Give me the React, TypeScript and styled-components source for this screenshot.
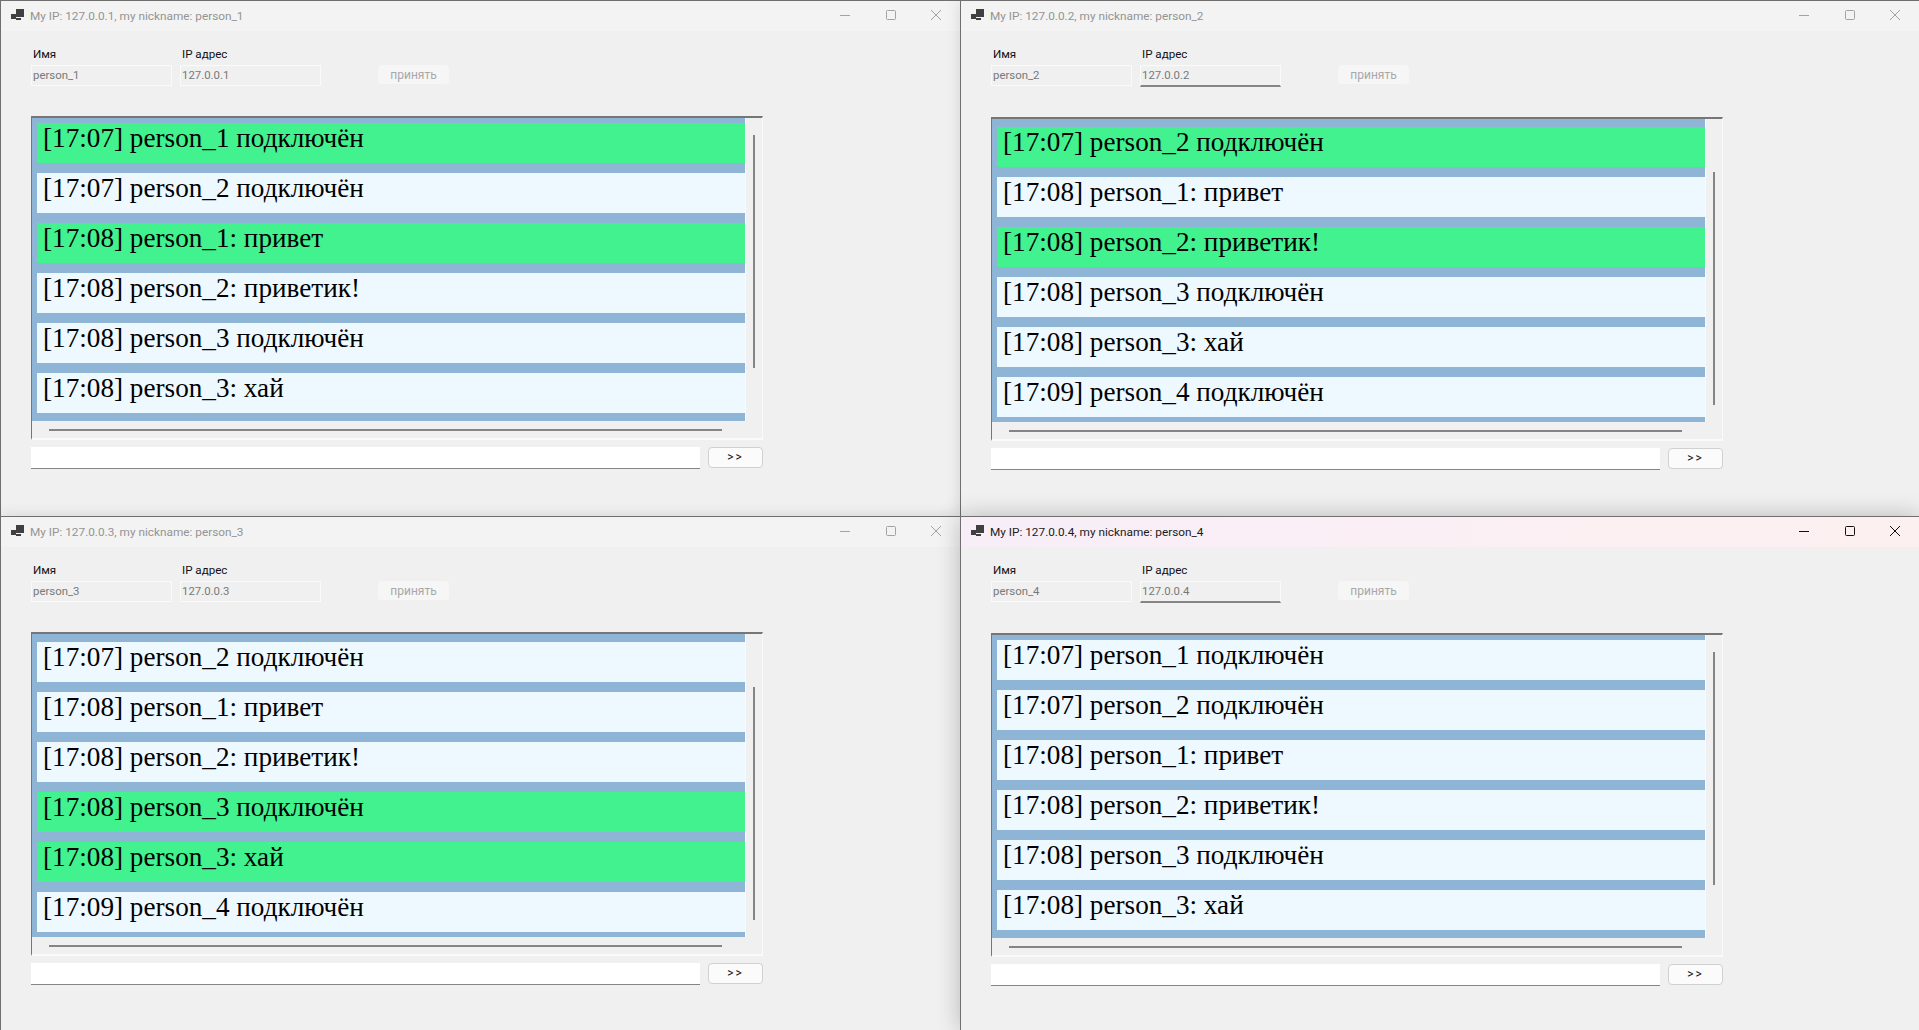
import React from "react";
import styled, { createGlobalStyle } from "styled-components";

const Global = createGlobalStyle`
  html, body { margin: 0; padding: 0; height: 100%; background: #f0f0f0; overflow: hidden; }
  #root { height: 100%; }
`;

const Desktop = styled.div`
  display: grid;
  grid-template-columns: 960px 959px;
  grid-template-rows: 516px 514px;
  width: 1919px;
  height: 1030px;
  overflow: hidden;
`;

const Win = styled.div<{ $active?: boolean; $layer: number }>`
  position: relative;
  z-index: ${(p) => p.$layer};
  box-sizing: border-box;
  display: flex;
  flex-direction: column;
  background: #f0f0f0;
  border: 1px solid #6f6f6f;
  border-right-width: 0;
  border-bottom-width: 0;
  box-shadow: 0 0 ${(p) => (p.$active ? 22 : 14)}px rgba(0, 0, 0, ${(p) => (p.$active ? 0.24 : 0.12)});
  font-family: Roboto, "Noto Sans", sans-serif;
`;

const TitleBar = styled.div<{ $active?: boolean }>`
  box-sizing: border-box;
  display: flex;
  align-items: center;
  height: 30px;
  flex: none;
  padding: 0 1px 2px 10px;
  background: ${(p) => (p.$active ? "linear-gradient(90deg, #f8eef8, #fdf0f0)" : "#f3f3f3")};
  color: ${(p) => (p.$active ? "#1b1b1b" : "#949494")};
`;

const TitleText = styled.span`
  margin: 2px 0 0 6px;
  flex: 1;
  font-size: 11.8px;
  white-space: nowrap;
`;

const CtlBtn = styled.div<{ $active?: boolean }>`
  width: 45.5px;
  height: 28px;
  display: flex;
  align-items: center;
  justify-content: center;
  color: ${(p) => (p.$active ? "#111" : "#a3a3a3")};
`;

const Body = styled.div`
  flex: 1;
  padding: 16px 0 0 30px;
  width: 732px;
`;

const Form = styled.div`
  display: flex;
  align-items: flex-start;
`;

const Field = styled.div`
  width: 141px;
  margin-right: 8px;
`;

const FieldLabel = styled.div`
  height: 15px;
  margin-bottom: 3px;
  padding-left: 2px;
  font-size: 11.6px;
  line-height: 15px;
  color: #111;
`;

const TextBox = styled.div<{ $focus?: boolean }>`
  box-sizing: border-box;
  height: ${(p) => (p.$focus ? 22 : 21)}px;
  padding-left: 1px;
  border: 1px solid #fafafa;
  border-bottom: ${(p) => (p.$focus ? "2px solid #858585" : "1px solid #fafafa")};
  font-size: 11.4px;
  line-height: 18px;
  color: #787878;
`;

const Accept = styled.div`
  margin: 18px 0 0 49px;
  width: 71px;
  height: 19px;
  background: #f6f6f6;
  border-radius: 4px;
  font-size: 12px;
  line-height: 21px;
  text-align: center;
  color: #a8a8a8;
`;

const Frame = styled.div`
  box-sizing: border-box;
  margin-top: 30px;
  width: 732px;
  height: 324px;
  display: grid;
  grid-template-columns: 714px 16px;
  grid-template-rows: 303px 1fr;
  border-top: 2px solid #767676;
  border-left: 1px solid #767676;
  border-right: 1px solid #fafafa;
  border-bottom: 2px solid #fafafa;
`;

const Viewport = styled.div<{ $top: number }>`
  overflow: hidden;
  background: #8eb4d6;
  padding: ${(p) => p.$top}px 0 0 5px;
  border-right: 1px solid #fafafa;
  display: flex;
  flex-direction: column;
  gap: 10px;
`;

const Row = styled.div<{ $mine?: boolean }>`
  flex: none;
  height: 40px;
  padding-left: 6px;
  background: ${(p) => (p.$mine ? "#42f28e" : "#edf8ff")};
  font-family: "Liberation Serif", "Times New Roman", serif;
  font-size: 27.2px;
  line-height: 31px;
  color: #000;
  white-space: nowrap;
`;

const VTrack = styled.div`
  position: relative;
`;

const VThumb = styled.div<{ $top: number }>`
  position: absolute;
  left: 7px;
  top: ${(p) => p.$top}px;
  width: 2px;
  height: 233px;
  background: #858585;
`;

const HTrack = styled.div`
  grid-column: 1 / span 2;
  padding: 8px 0 0 17px;
`;

const HThumb = styled.div`
  width: 673px;
  height: 2px;
  background: #858585;
`;

const SendRow = styled.div`
  display: flex;
  margin-top: 7px;
  gap: 8px;
`;

const SendBox = styled.div`
  box-sizing: border-box;
  width: 669px;
  height: 22px;
  background: #fff;
  border-bottom: 1px solid #858585;
`;

const SendBtn = styled.div`
  box-sizing: border-box;
  width: 55px;
  height: 21px;
  background: #fbfbfb;
  border: 1px solid #d0d0d0;
  border-radius: 4px;
  font-size: 12px;
  letter-spacing: 2px;
  line-height: 18px;
  text-align: center;
  color: #111;
`;

const AppIcon = () => (
  <svg width="13" height="12" viewBox="0 0 13 12" fill="#404040">
    <rect x="0" y="5" width="5" height="5" />
    <rect x="5" y="0" width="8" height="8" />
    <rect x="5" y="9" width="5" height="2" />
  </svg>
);

const MinIcon = () => (
  <svg width="12" height="12" viewBox="0 0 12 12" stroke="currentColor" fill="none">
    <path d="M1 6.5H11" />
  </svg>
);

const MaxIcon = () => (
  <svg width="12" height="12" viewBox="0 0 12 12" stroke="currentColor" fill="none">
    <rect x="1.5" y="1.5" width="9" height="9" rx="1" />
  </svg>
);

const CloseIcon = () => (
  <svg width="12" height="12" viewBox="0 0 12 12" stroke="currentColor" fill="none">
    <path d="M1 1L11 11M11 1L1 11" />
  </svg>
);

type Msg = [string, boolean?];

const windows: {
  n: number;
  active?: boolean;
  focus?: boolean;
  top: number;
  thumb: number;
  layer: number;
  rows: Msg[];
}[] = [
  {
    n: 1,
    top: 5,
    thumb: 17,
    layer: 1,
    rows: [
      ["[17:07] person_1 подключён", true],
      ["[17:07] person_2 подключён"],
      ["[17:08] person_1: привет", true],
      ["[17:08] person_2: приветик!"],
      ["[17:08] person_3 подключён"],
      ["[17:08] person_3: хай"],
    ],
  },
  {
    n: 2,
    focus: true,
    top: 8,
    thumb: 53,
    layer: 2,
    rows: [
      ["[17:07] person_2 подключён", true],
      ["[17:08] person_1: привет"],
      ["[17:08] person_2: приветик!", true],
      ["[17:08] person_3 подключён"],
      ["[17:08] person_3: хай"],
      ["[17:09] person_4 подключён"],
    ],
  },
  {
    n: 3,
    top: 8,
    thumb: 53,
    layer: 3,
    rows: [
      ["[17:07] person_2 подключён"],
      ["[17:08] person_1: привет"],
      ["[17:08] person_2: приветик!"],
      ["[17:08] person_3 подключён", true],
      ["[17:08] person_3: хай", true],
      ["[17:09] person_4 подключён"],
    ],
  },
  {
    n: 4,
    active: true,
    focus: true,
    top: 5,
    thumb: 17,
    layer: 4,
    rows: [
      ["[17:07] person_1 подключён"],
      ["[17:07] person_2 подключён"],
      ["[17:08] person_1: привет"],
      ["[17:08] person_2: приветик!"],
      ["[17:08] person_3 подключён"],
      ["[17:08] person_3: хай"],
    ],
  },
];

export default function App() {
  return (
    <>
      <Global />
      <Desktop>
        {windows.map((w) => (
          <Win key={w.n} $active={w.active} $layer={w.layer}>
            <TitleBar $active={w.active}>
              <AppIcon />
              <TitleText>{`My IP: 127.0.0.${w.n}, my nickname: person_${w.n}`}</TitleText>
              <CtlBtn $active={w.active}><MinIcon /></CtlBtn>
              <CtlBtn $active={w.active}><MaxIcon /></CtlBtn>
              <CtlBtn $active={w.active}><CloseIcon /></CtlBtn>
            </TitleBar>
            <Body>
              <Form>
                <Field>
                  <FieldLabel>Имя</FieldLabel>
                  <TextBox>{`person_${w.n}`}</TextBox>
                </Field>
                <Field>
                  <FieldLabel>IP адрес</FieldLabel>
                  <TextBox $focus={w.focus}>{`127.0.0.${w.n}`}</TextBox>
                </Field>
                <Accept>принять</Accept>
              </Form>
              <Frame>
                <Viewport $top={w.top}>
                  {w.rows.map(([text, mine]) => (
                    <Row key={text} $mine={mine}>{text}</Row>
                  ))}
                </Viewport>
                <VTrack><VThumb $top={w.thumb} /></VTrack>
                <HTrack><HThumb /></HTrack>
              </Frame>
              <SendRow>
                <SendBox />
                <SendBtn>{">>"}</SendBtn>
              </SendRow>
            </Body>
          </Win>
        ))}
      </Desktop>
    </>
  );
}
